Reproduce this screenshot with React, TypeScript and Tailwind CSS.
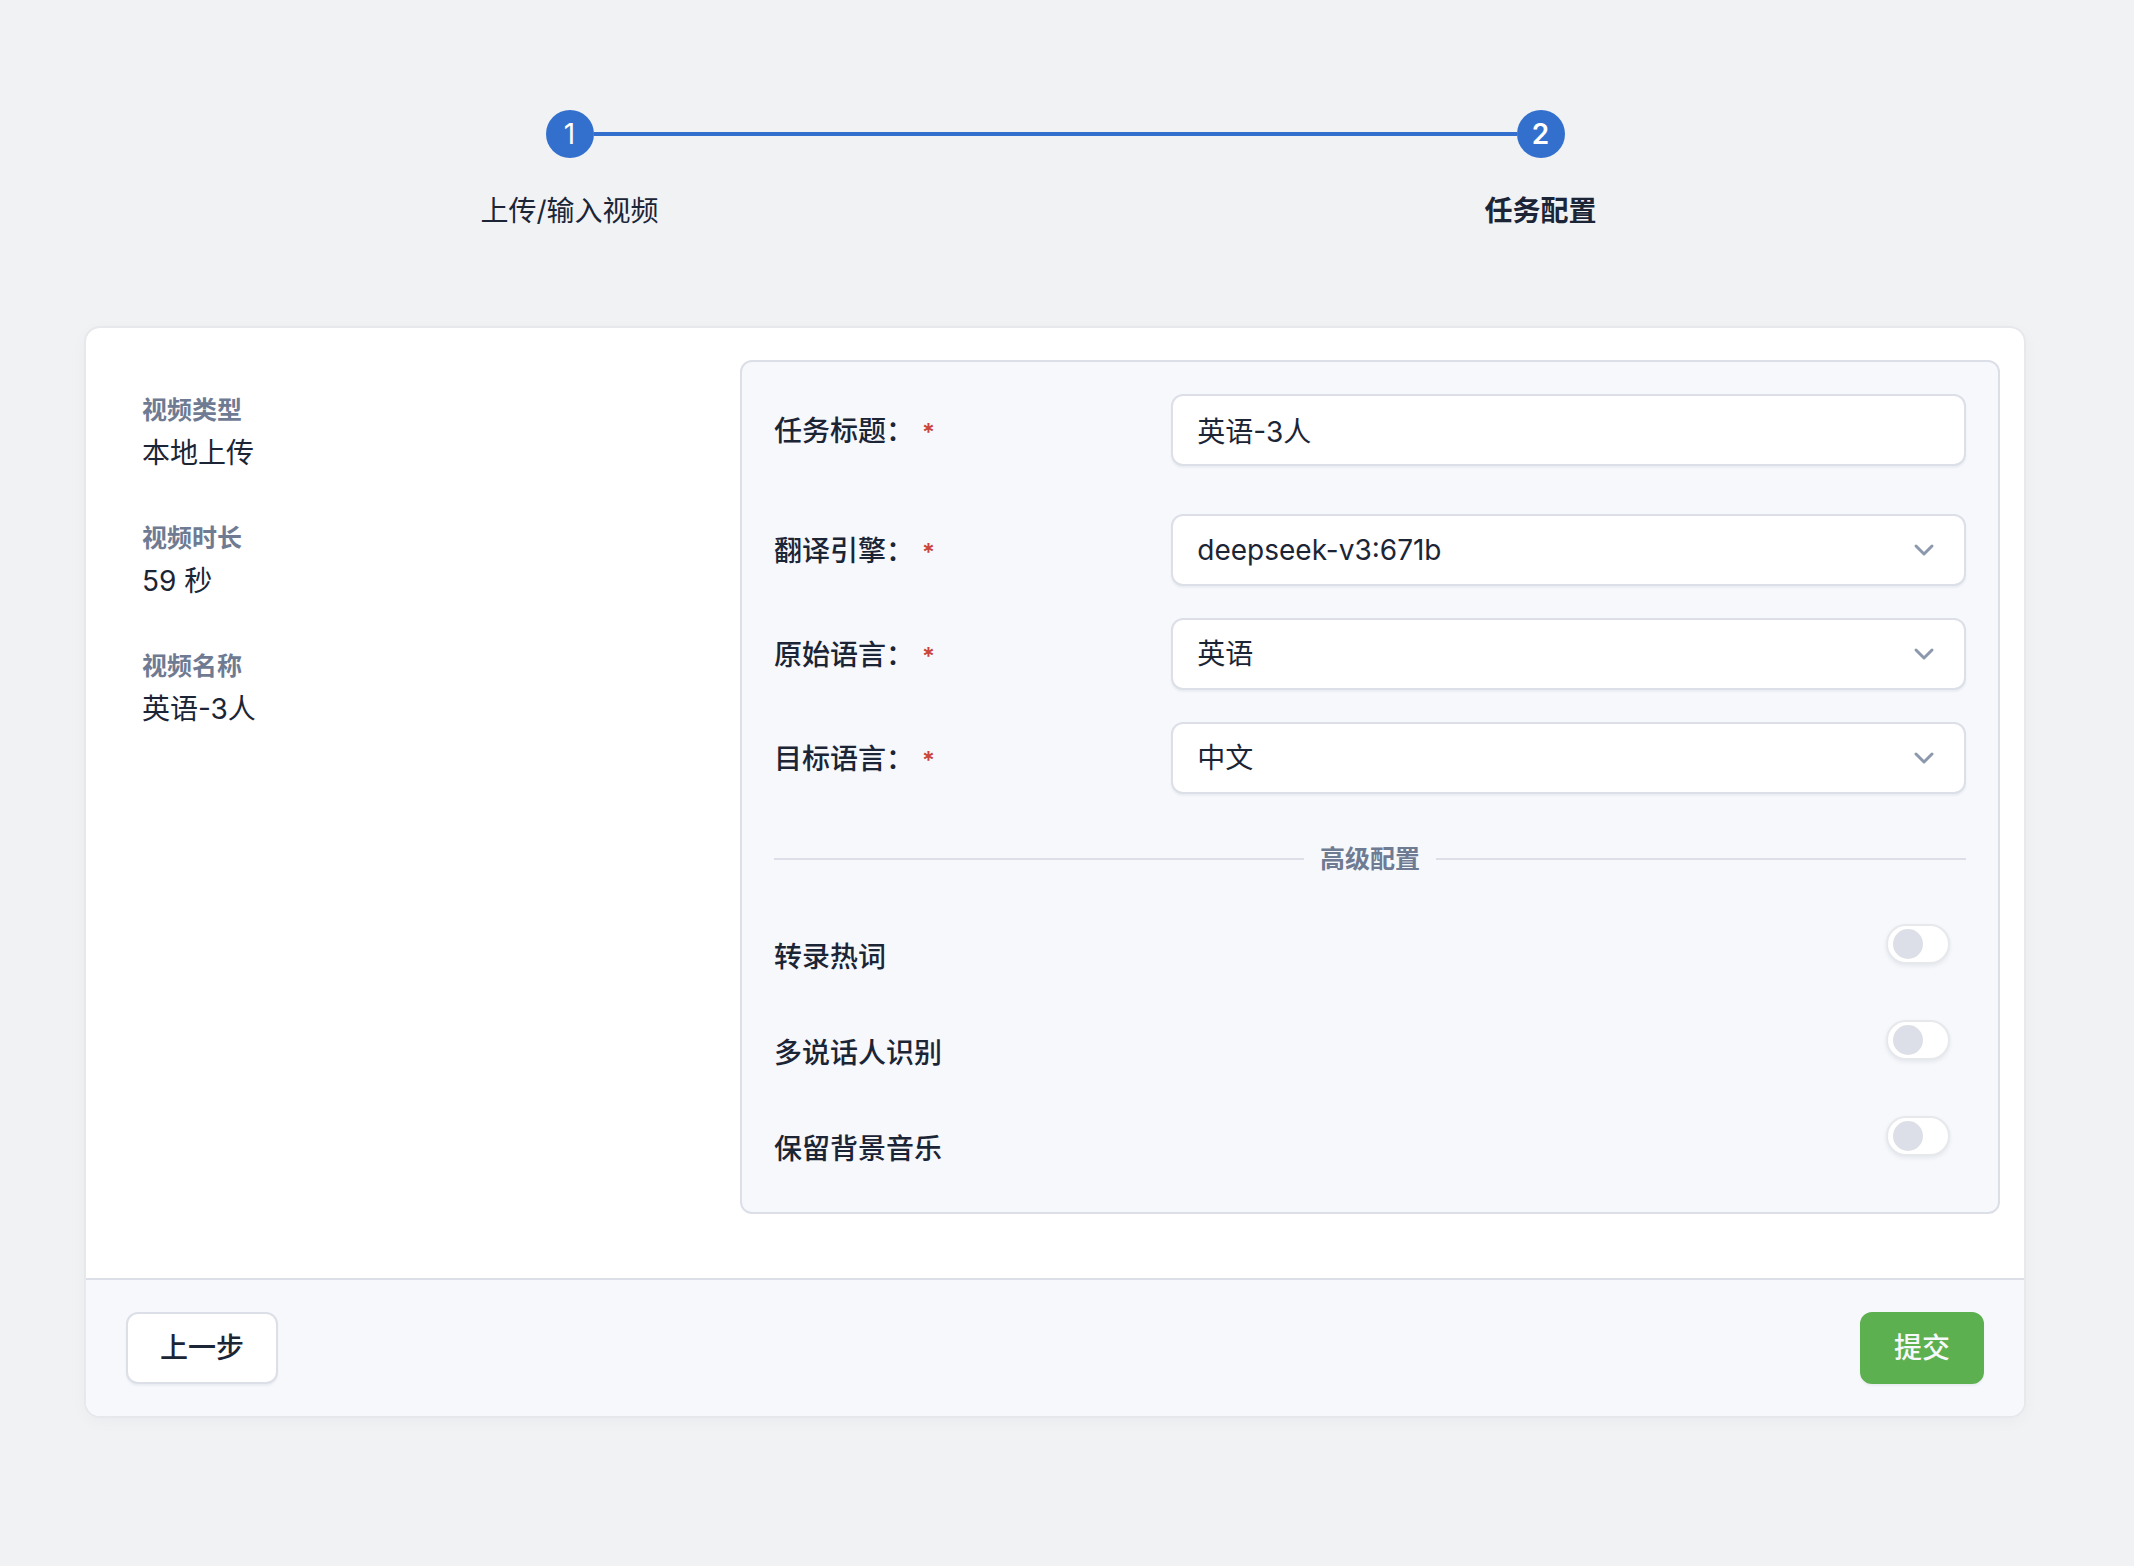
import { useState } from 'react'

const VIDEO_INFO = [
  { label: '视频类型', value: '本地上传' },
  { label: '视频时长', value: '59 秒' },
  { label: '视频名称', value: '英语-3人' },
]

const SELECTS = [
  {
    id: 'engine',
    label: '翻译引擎：',
    options: ['deepseek-v3:671b', 'deepseek-r1:671b'],
  },
  { id: 'source', label: '原始语言：', options: ['英语', '中文', '日语'] },
  { id: 'target', label: '目标语言：', options: ['中文', '英语', '日语'] },
]

const SWITCHES = [
  { id: 'hotwords', label: '转录热词' },
  { id: 'speakers', label: '多说话人识别' },
  { id: 'music', label: '保留背景音乐' },
]

const fieldClass =
  'h-18 w-full appearance-none rounded-xl border-2 border-[#dcdfe7] bg-white px-6 shadow-[0_2px_2px_rgba(24,36,51,0.05)] outline-none focus:border-[#3370cd]'

function ChevronIcon() {
  return (
    <svg
      viewBox="0 0 16 16"
      className="pointer-events-none absolute top-1/2 right-6.5 size-8 -translate-y-1/2"
      fill="none"
      stroke="#8b98ad"
      strokeWidth="1.5"
      strokeLinecap="round"
      strokeLinejoin="round"
      aria-hidden="true"
    >
      <path d="M4 6l4 4l4 -4" />
    </svg>
  )
}

function FieldLabel({ htmlFor, text }: { htmlFor: string; text: string }) {
  return (
    <label htmlFor={htmlFor} className="w-1/3 pt-0.5 font-medium">
      {text}
      <span className="ml-2 text-2xl font-semibold text-[#c9453d]">*</span>
    </label>
  )
}

function Steps() {
  return (
    <ol className="grid grid-cols-2 text-center">
      <li>
        <div className="flex items-center">
          <span className="flex-1" />
          <span className="flex size-12 items-center justify-center rounded-full bg-[#3370cd] text-white">
            1
          </span>
          <span className="h-1 flex-1 bg-[#3370cd]" />
        </div>
        <p className="mt-8">上传/输入视频</p>
      </li>
      <li className="font-semibold" aria-current="step">
        <div className="flex items-center">
          <span className="h-1 flex-1 bg-[#3370cd]" />
          <span className="flex size-12 items-center justify-center rounded-full bg-[#3370cd] text-white">
            2
          </span>
          <span className="flex-1" />
        </div>
        <p className="mt-8">任务配置</p>
      </li>
    </ol>
  )
}

export default function App() {
  const [title, setTitle] = useState('英语-3人')

  return (
    <div className="min-h-screen bg-[#f0f2f4] pt-[110px] pr-[108px] pb-16 pl-[84px] font-['Inter','Noto_Sans_CJK_SC',sans-serif] text-[28px] leading-[42px] text-[#1b2536]">
      <Steps />

      <form
        className="mt-[94px] overflow-hidden rounded-2xl border-2 border-[#e6e8ec] bg-white bg-clip-padding shadow-[0_4px_16px_rgba(24,36,51,0.03)]"
        onSubmit={(e) => e.preventDefault()}
      >
        <div className="flex items-start pt-8 pr-6 pb-16">
          <dl className="flex flex-1 flex-col gap-[46px] pt-8 pl-14">
            {VIDEO_INFO.map((item) => (
              <div key={item.label}>
                <dt className="pt-0.5 text-[25px] leading-8 font-semibold text-[#6f7b92]">
                  {item.label}
                </dt>
                <dd className="mt-1.5">{item.value}</dd>
              </div>
            ))}
          </dl>

          <div className="w-[1260px] max-w-[66%] rounded-xl border-2 border-[#dcdfe7] bg-[#f6f8fc] p-8">
            <div className="mb-12 flex items-center">
              <FieldLabel htmlFor="title" text="任务标题：" />
              <div className="w-2/3">
                <input
                  id="title"
                  type="text"
                  required
                  value={title}
                  onChange={(e) => setTitle(e.target.value)}
                  className={fieldClass}
                />
              </div>
            </div>

            <div className="flex flex-col gap-8">
              {SELECTS.map((s) => (
                <div key={s.id} className="flex items-center">
                  <FieldLabel htmlFor={s.id} text={s.label} />
                  <div className="relative w-2/3">
                    <select id={s.id} required className={fieldClass}>
                      {s.options.map((o) => (
                        <option key={o}>{o}</option>
                      ))}
                    </select>
                    <ChevronIcon />
                  </div>
                </div>
              ))}
            </div>

            <div className="my-16 flex h-0.5 items-center gap-4 text-[25px] leading-8 font-semibold text-[#6f7b92]">
              <span className="h-0.5 flex-1 bg-[#dcdfe7]" />
              高级配置
              <span className="h-0.5 flex-1 bg-[#dcdfe7]" />
            </div>

            <div className="flex flex-col gap-8">
              {SWITCHES.map((s) => (
                <div key={s.id} className="flex h-16 items-start justify-between pr-4">
                  <label htmlFor={s.id} className="pt-3 font-medium">
                    {s.label}
                  </label>
                  <input
                    id={s.id}
                    type="checkbox"
                    role="switch"
                    className="flex h-10 w-16 appearance-none items-center rounded-full border-2 border-[#e6e8ec] bg-white px-[5px] shadow-[0_2px_4px_rgba(24,36,51,0.08)] before:size-[30px] before:rounded-full before:bg-[#dcdfe7] before:content-[''] checked:justify-end checked:bg-[#3370cd] checked:before:bg-white"
                  />
                </div>
              ))}
            </div>
          </div>
        </div>

        <div className="flex justify-between border-t-2 border-[#dcdfe7] bg-[#f6f8fc] px-10 py-8">
          <button
            type="button"
            className="h-18 rounded-xl border-2 border-[#dcdfe7] bg-white px-8 font-medium shadow-[0_2px_2px_rgba(24,36,51,0.05)]"
          >
            上一步
          </button>
          <button
            type="submit"
            className="h-18 rounded-xl border-2 border-[#5db04f] bg-[#5db04f] px-8 font-medium text-[#f6f8fc] shadow-[0_2px_2px_rgba(24,36,51,0.05)]"
          >
            提交
          </button>
        </div>
      </form>
    </div>
  )
}
